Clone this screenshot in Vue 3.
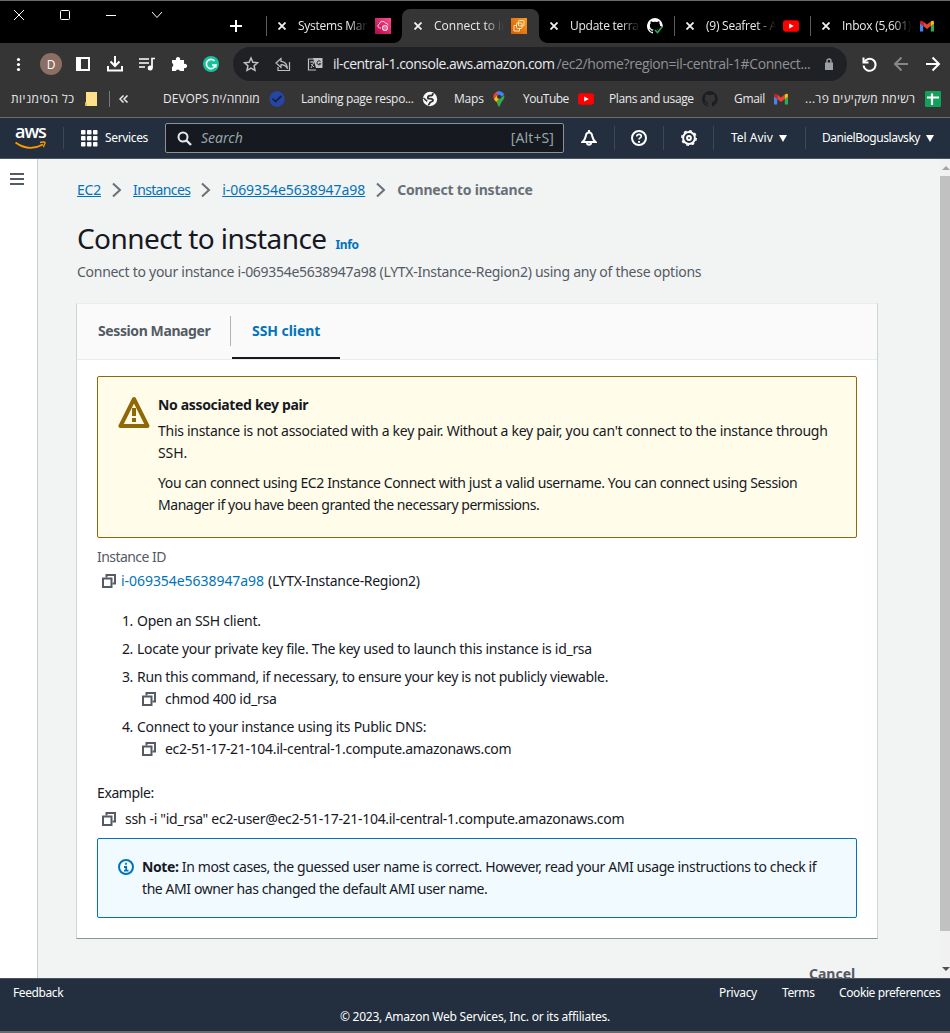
<script setup>
const tabs = [
  { title: 'Systems Man', icon: 'systems', cls: 'sys' },
  { title: 'Connect to in', icon: 'ec2', cls: 'act' },
  { title: 'Update terraf', icon: 'github', cls: 'plain' },
  { title: '(9) Seafret - A', icon: 'youtube', cls: 'sep' },
  { title: 'Inbox (5,601)', icon: 'gmail', cls: 'sep' }
]
const bookmarks = [
  { title: 'כל הסימניות', icon: 'folder', cls: 'b-all', rtl: true },
  { title: 'מומחה/ית DEVOPS', icon: 'badge', cls: 'b-dev', rtl: true },
  { title: 'Landing page respo...', icon: 'globe', cls: 'b-land' },
  { title: 'Maps', icon: 'maps', cls: 'b-maps' },
  { title: 'YouTube', icon: 'youtube', cls: 'b-yt' },
  { title: 'Plans and usage', icon: 'githubdark', cls: 'b-plans' },
  { title: 'Gmail', icon: 'gmail', cls: 'b-gmail' },
  { title: 'רשימת משקיעים פר...', icon: 'sheet', cls: 'b-sheet', rtl: true }
]
const crumbs = [
  { t: 'EC2', c: 'c1' },
  { t: 'Instances', c: 'c2' },
  { t: 'i-069354e5638947a98', c: 'c3' }
]
</script>

<template>
  <div class="screen">
    <svg class="defs" width="0" height="0">
      <defs>
        <linearGradient id="pink" x1="0" y1="1" x2="1" y2="0"><stop offset="0" stop-color="#b0084d" /><stop offset="1" stop-color="#ff4f8b" /></linearGradient>
        <linearGradient id="orange" x1="0" y1="1" x2="1" y2="0"><stop offset="0" stop-color="#d45b07" /><stop offset="1" stop-color="#f99b1d" /></linearGradient>
        <symbol id="systems" viewBox="0 0 16 16"><rect width="16" height="16" fill="url(#pink)" /><path d="M6 10H4.600a2 2 0 0 1-.2-3.900 3.200 3.200 0 0 1 6.100-.9A2.300 2.300 0 0 1 13 7.200" fill="none" stroke="#ffd0e0" /><circle cx="10" cy="10" r="2.400" fill="none" stroke="#ffd0e0" stroke-width="1.300" /><circle cx="10" cy="10" r=".8" fill="#ffd0e0" /></symbol>
        <symbol id="ec2" viewBox="0 0 16 16"><rect width="16" height="16" fill="url(#orange)" /><g fill="none" stroke="#ffe3bd" stroke-width="1"><rect x="7.500" y="2.500" width="5.500" height="5.500" rx="1" /><rect x="5.500" y="5" width="5.500" height="5.500" rx="1" /><path d="M5 7.500H3v5.500h5.500V11" /></g></symbol>
        <symbol id="github" viewBox="0 0 16 16"><path d="M8 0a8 8 0 0 0-2.500 15.600c.4.100.5-.2.500-.4v-1.500c-2.200.5-2.700-1-2.700-1-.4-.9-.9-1.200-.9-1.200-.7-.5.1-.5.100-.5.800.1 1.200.8 1.200.8.700 1.300 1.900.9 2.300.7.100-.5.300-.9.500-1.100-1.800-.2-3.600-.9-3.600-4 0-.9.300-1.600.8-2.100-.1-.2-.4-1 .1-2.100 0 0 .7-.2 2.200.8a7.500 7.500 0 0 1 4 0c1.500-1 2.200-.8 2.200-.8.400 1.100.2 1.900.1 2.100.5.600.8 1.300.8 2.100 0 3.100-1.900 3.700-3.600 4 .3.200.5.700.5 1.500v2.200c0 .2.100.5.500.4A8 8 0 0 0 8 0z" fill="currentColor" /></symbol>
        <symbol id="youtube" viewBox="0 0 16 16"><rect y="2.300" width="16" height="11.500" rx="2.800" fill="#f00" /><path d="M6.200 5.400v5.200L10.800 8z" fill="#fff" /></symbol>
        <symbol id="gmail" viewBox="0 0 16 16"><path d="M1 4v9.500h3.200V7z" fill="#4285f4" /><path d="M15 4v9.500h-3.200V7z" fill="#34a853" /><path d="M4.200 3.600L8 6.600l3.800-3V8L8 11 4.200 8z" fill="#ea4335" /><path d="M1 4.200C1 2.500 2.700 2.200 4.200 3.600V8L1 5.600z" fill="#c5221f" /><path d="M15 4.200c0-1.700-1.700-2-3.200-.6V8L15 5.600z" fill="#fbbc04" /></symbol>
        <symbol id="folder" viewBox="0 0 16 16"><path d="M3 1h11v14H2v-3l1-1z" fill="#ffe08a" /><path d="M2 11.500l2 1V15H2z" fill="#e9b949" /></symbol>
        <symbol id="badge" viewBox="0 0 16 16"><circle cx="8" cy="8" r="7.700" fill="#2646a6" /><path d="M3.500 7.500l3 3L12.500 5" fill="none" stroke="#14233f" stroke-width="1.700" /></symbol>
        <symbol id="globe" viewBox="0 0 16 16"><circle cx="8" cy="8" r="7.200" fill="#f8f9fa" /><path d="M10.800 2.200c.3 2-1 2.500-2.800 2.500S5.500 6 6 7.500c2 .3 4.500-.2 5 1.500s-2.200 1.600-2.800 2.400-.7 1.700-2 2.600" fill="none" stroke="#303134" stroke-width="1.800" /><path d="M1.500 7l3.700 3.400" stroke="#303134" stroke-width="1.500" /></symbol>
        <symbol id="maps" viewBox="0 0 16 16"><path d="M8 .3a5.500 5.500 0 0 0-4.300 2L7 5z" fill="#ea4335" /><path d="M3.700 2.300A5.400 5.400 0 0 0 2.900 8L7 5z" fill="#ea4335" /><path d="M8 .3A5.500 5.500 0 0 1 13.100 4L9 6 5 1.200z" fill="#4285f4" /><path d="M13.100 4c1 3-1 5-2.500 7-1.200 1.600-1.600 4.700-2.600 4.700S7 13.500 5.500 11z" fill="#34a853" /><path d="M2.900 8c.6 1.300 1.700 2.300 2.600 3L9 7 6.500 4z" fill="#fbbc04" /><circle cx="8" cy="5.800" r="2" fill="#303134" /></symbol>
        <symbol id="sheet" viewBox="0 0 16 16"><rect width="16" height="16" rx="1" fill="#12a05c" /><path d="M2 6.500h12M7 2.500V14" stroke="#fff" stroke-width="2.200" /></symbol>
        <symbol id="copy" viewBox="0 0 14 14"><path d="M4.500 3.500V1H13v8.500h-2.500" fill="none" stroke="#545b64" stroke-width="2" /><path d="M1 4.500h8.500V13H1z" fill="none" stroke="#545b64" stroke-width="2" /></symbol>
      </defs>
    </svg>

    <div class="tabstrip">
      <svg class="winctl" width="175" height="42" fill="none" stroke="#fff" stroke-width="1"><path d="M14 9l10 10M24 9l-10 10" /><rect x="60.500" y="9.500" width="9" height="9" rx="1" /><path d="M106 14.500h10M152 11l5 5.500 5-5.500" /></svg>
      <svg class="plus" width="12" height="12"><path d="M6 0v12M0 6h12" stroke="#fff" stroke-width="2" /></svg>
      <div v-for="t in tabs" :key="t.title" class="tab" :class="t.cls">
        <svg class="x" width="8" height="8"><path d="M.5.5l7 7M7.500.5l-7 7" stroke="#f1f1f1" stroke-width="1.800" /></svg>
        <span class="tabtext">{{ t.title }}</span>
        <span class="fav">
          <svg width="16" height="16"><use :href="'#' + t.icon" /></svg>
          <svg v-if="t.icon === 'github'" class="check" width="9" height="8"><path d="M1 4l2.500 2.500L8 1" stroke="#000" stroke-width="4" fill="none" /><path d="M1 4l2.500 2.500L8 1" stroke="#2da94f" stroke-width="1.600" fill="none" /></svg>
        </span>
      </div>
    </div>

    <div class="toolbar">
      <svg class="tools" width="233" height="38">
        <g fill="#fff"><circle cx="18.500" cy="16.500" r="1.600" /><circle cx="18.500" cy="21.500" r="1.600" /><circle cx="18.500" cy="26.500" r="1.600" /></g>
        <circle cx="51" cy="21" r="11" fill="#8d6e63" />
        <text x="51" y="25.500" text-anchor="middle" class="avatar">D</text>
        <path d="M77 15h12v12H77z" fill="none" stroke="#fff" stroke-width="2" /><path d="M77 15h4v12h-4z" fill="#fff" />
        <path d="M115 13v10M110.500 18.500l4.500 4.500 4.500-4.500M108 23v4.500h14V23" fill="none" stroke="#fff" stroke-width="2" />
        <path d="M139 16h10M139 20h10M139 24h6" stroke="#fff" stroke-width="1.500" /><path d="M152 25v-9.500h3" fill="none" stroke="#fff" stroke-width="1.700" /><circle cx="150.200" cy="25" r="2.500" fill="#fff" />
        <path d="M172 17h4a2.200 2.200 0 1 1 4 0h4v4a2.200 2.200 0 1 1 0 4v3h-4a2.200 2.200 0 0 0-4.200 0H172v-4a2.200 2.200 0 0 0 0-4z" fill="#fff" />
        <circle cx="211" cy="21" r="8" fill="#15c39a" /><path d="M214.500 18a4.600 4.600 0 1 0 1 4h-3.500" fill="none" stroke="#fff" stroke-width="1.600" /><path d="M213 24h3v-3" fill="none" stroke="#fff" stroke-width="1.200" />
      </svg>
      <div class="omnibox">
        <svg width="100" height="34" fill="none" stroke="#bdc1c6" stroke-width="1.500">
          <path d="M18 11l1.900 4.200 4.600.5-3.400 3.100.9 4.500-4-2.300-4 2.300.9-4.500-3.400-3.100 4.600-.5z" />
          <path d="M48 11.500l-5 4.500 5 4.500v-2.800c3.500 0 5 1 6.500 4-.3-4.500-2.500-7-6.500-7.300z" stroke-width="1.200" /><path d="M45 20v3.500h11.500V15" stroke-width="1.200" />
          <path d="M83 12h-7.500v11H83" stroke-width="1.200" /><path d="M77 15h4M79 14v1.500M78 21l3-6M78 17l3 3" stroke-width=".9" /><path d="M80 11h9.500v10H83z" fill="#bdc1c6" stroke="none" /><path d="M87.500 14.500a2 2 0 1 0 .3 2.200h-2" stroke="#202124" stroke-width="1" />
        </svg>
        <span class="url"><span class="host">il-central-1.console.aws.amazon.com</span>/ec2/home?region=il-central-1#Connect...</span>
        <svg class="lock" width="8" height="12"><path d="M0 4.500h8V12H0z" fill="#9aa0a6" /><path d="M2 5V3a2 2 0 0 1 4 0v2" fill="none" stroke="#9aa0a6" stroke-width="1.400" /></svg>
      </div>
      <svg class="navs" width="103" height="38" fill="none" stroke-width="2">
        <path d="M16.500 14.500v5h5" stroke="#fff" /><path d="M17 19.500a6 6 0 1 1-.4 3" stroke="#fff" />
        <path d="M61 21H48.500M54.500 14.500L48 21l6.500 6.500" stroke="#85878a" />
        <path d="M79 21h12.500M85.500 14.500L92 21l-6.500 6.500" stroke="#fff" />
      </svg>
    </div>

    <div class="bookmarks">
      <template v-for="(b, i) in bookmarks" :key="b.title">
        <div class="bm" :class="b.cls">
          <span class="bmt" :dir="b.rtl ? 'rtl' : 'ltr'">{{ b.title }}</span>
          <svg width="16" height="16" :class="{ dark: b.icon === 'githubdark' }"><use :href="b.icon === 'githubdark' ? '#github' : '#' + b.icon" /></svg>
        </div>
        <div v-if="i === 0" class="more"><svg width="10" height="8"><path d="M4.500.5L1 4l3.500 3.500M8.500.5L5 4l3.500 3.500" fill="none" stroke="#e8eaed" stroke-width="1.500" /></svg></div>
      </template>
    </div>

    <header class="awsnav">
      <div class="logo">
        <span class="aws">aws</span>
        <svg width="32" height="9" fill="none" stroke="#ff9900" stroke-width="1.800"><path d="M.5 1.500c9 6.500 19 6.500 27.500 2" /><path d="M25 1.500c3-1 5.500-.5 5 .5s-.5 2.500-1.800 4" stroke-width="1.400" /></svg>
      </div>
      <div class="services">
        <svg width="17" height="17" fill="#fff"><template v-for="r in 3" :key="r"><rect v-for="c in 3" :key="c" :x="(c - 1) * 6" :y="(r - 1) * 6" width="4.500" height="4.500" rx=".8" /></template></svg>
        <span class="n-serv">Services</span>
      </div>
      <div class="search">
        <svg width="15" height="15" fill="none" stroke="#e4e8e8" stroke-width="2"><circle cx="6" cy="6" r="4.500" /><path d="M9.500 9.500l4.500 4.500" stroke-width="2.400" /></svg>
        <span class="ph">Search</span><span class="alt">[Alt+S]</span>
      </div>
      <div class="ic bell"><svg width="16" height="16" fill="none" stroke="#fff" stroke-width="2"><path d="M8 0v2M1.500 12h13C12.500 10 11.700 8.500 11.300 6.500 11 3.500 9.800 2.500 8 2.500S5 3.500 4.700 6.500C4.300 8.500 3.500 10 1.500 12z" /><path d="M6 12.500c0 3 4 3 4 0" /></svg></div>
      <div class="ic help"><svg width="16" height="16" fill="none" stroke="#fff" stroke-width="2"><circle cx="8" cy="8" r="7" /><path d="M5.700 6.500c0-3 4.600-2.700 4.600-.2C10.300 8 8 7.800 8 9.600" stroke-width="1.600" /><path d="M8 11v1.700" /></svg></div>
      <div class="ic gear"><svg width="16" height="16" fill="none" stroke="#fff"><circle cx="8" cy="8" r="5.900" stroke-width="2" /><circle cx="8" cy="8" r="7.200" stroke-width="1.500" stroke-dasharray="2.830 2.825" /><circle cx="8" cy="8" r="1.900" stroke-width="2" /></svg></div>
      <div class="region"><span class="n-tel">Tel Aviv</span><i class="tri"></i></div>
      <div class="user"><span class="n-user">DanielBoguslavsky</span><i class="tri"></i></div>
    </header>

    <div class="body">
      <aside class="side"><svg width="14" height="12"><path d="M0 1h14M0 6h14M0 11h14" stroke="#545b64" stroke-width="2" /></svg></aside>
      <main class="main">
        <nav class="crumbs">
          <template v-for="c in crumbs" :key="c.t"><a :class="c.c">{{ c.t }}</a><svg width="10" height="16"><path d="M1 1.500L8 8l-7 6.500" fill="none" stroke="#687078" stroke-width="2" /></svg></template>
          <b class="c4">Connect to instance</b>
        </nav>
        <div class="head"><h1>Connect to instance</h1><a class="info">Info</a></div>
        <p class="desc">Connect to your instance i-069354e5638947a98 (LYTX-Instance-Region2) using any of these options</p>

        <section class="panel">
          <div class="ptabs">
            <div class="pt sm"><span>Session Manager</span></div>
            <div class="pt ssh"><span>SSH client</span></div>
          </div>
          <div class="pbody">
            <div class="alert">
              <svg width="32" height="32"><path d="M16 3L2.500 30h27z" fill="none" stroke="#906806" stroke-width="4" stroke-linejoin="round" /><path d="M16 12v8M16 22v4" stroke="#906806" stroke-width="4" /></svg>
              <div>
                <b class="line a0">No associated key pair</b>
                <p><span class="line a1">This instance is not associated with a key pair. Without a key pair, you can't connect to the instance through</span><span class="line a2">SSH.</span></p>
                <p class="second"><span class="line a3">You can connect using EC2 Instance Connect with just a valid username. You can connect using Session</span><span class="line a4">Manager if you have been granted the necessary permissions.</span></p>
              </div>
            </div>
            <div class="label">Instance ID</div>
            <div class="row idrow"><svg width="14" height="14"><use href="#copy" /></svg><a class="i1">i-069354e5638947a98</a><span class="i2">(LYTX-Instance-Region2)</span></div>
            <div class="steps">
              <div class="step"><span>1.</span><span class="s1">Open an SSH client.</span></div>
              <div class="step"><span>2.</span><span class="s2">Locate your private key file. The key used to launch this instance is id_rsa</span></div>
              <div class="step"><span>3.</span><div><span class="s3">Run this command, if necessary, to ensure your key is not publicly viewable.</span><div class="row sub"><svg width="14" height="14"><use href="#copy" /></svg><span class="s4">chmod 400 id_rsa</span></div></div></div>
              <div class="step"><span>4.</span><div><span class="s5">Connect to your instance using its Public DNS:</span><div class="row sub"><svg width="14" height="14"><use href="#copy" /></svg><span class="s6">ec2-51-17-21-104.il-central-1.compute.amazonaws.com</span></div></div></div>
            </div>
            <div class="ex">Example:</div>
            <div class="row exrow"><svg width="14" height="14"><use href="#copy" /></svg><span class="e1">ssh -i "id_rsa" ec2-user@ec2-51-17-21-104.il-central-1.compute.amazonaws.com</span></div>
            <div class="note">
              <svg width="16" height="16"><circle cx="8" cy="8" r="7" fill="none" stroke="#0073bb" stroke-width="2" /><path d="M8 3.800v2M6 8h2.200v3.500M6 11.700h4.500" fill="none" stroke="#0073bb" stroke-width="1.800" /></svg>
              <div><span class="line n1"><b>Note:</b> In most cases, the guessed user name is correct. However, read your AMI usage instructions to check if</span><span class="line n2">the AMI owner has changed the default AMI user name.</span></div>
            </div>
          </div>
        </section>
        <div class="actions"><b>Cancel</b></div>
      </main>
      <div class="scroll"><i class="up"></i><div class="thumb"></div><i class="down"></i></div>
    </div>

    <footer class="foot">
      <div class="frow"><span class="f1">Feedback</span><span class="f2">Privacy</span><span class="f3">Terms</span><span class="f4">Cookie preferences</span></div>
      <div class="copyr"><span>© 2023, Amazon Web Services, Inc. or its affiliates.</span></div>
    </footer>
  </div>
</template>

<style>
body { margin: 0; overflow: hidden; }
</style>

<style scoped>
* { box-sizing: border-box; }
p, h1 { margin: 0; }
svg { display: block; flex: none; }
.screen { width: 950px; height: 1033px; display: flex; flex-direction: column; overflow: hidden; font: 14px/22px "Noto Sans", "Open Sans", sans-serif; color: #16191f; white-space: nowrap; }
.defs { position: absolute; }
.tabstrip { height: 43px; flex: none; background: #000; border-top: 1px solid #6b6b6b; display: flex; color: #e8eaed; font: 12px/18px "Open Sans", sans-serif; }
.winctl { margin-right: 55px; }
.plus { margin: 19px 24px 0 0; }
.tab { width: 136px; flex: none; height: 34px; margin-top: 8px; display: flex; align-items: center; padding-left: 12px; position: relative; }
.sys::before, .sep::before { content: ""; position: absolute; left: 0; top: 7px; width: 1px; height: 20px; background: #5c5c5c; }
.act { background: #353535; border-radius: 8px 8px 0 0; width: 137px; margin-right: -1px; }
.act::before, .act::after { content: ""; position: absolute; bottom: 0; width: 8px; height: 8px; }
.act::before { left: -8px; background: radial-gradient(circle at 0 0, #000 7.500px, #353535 8px); }
.act::after { right: -8px; background: radial-gradient(circle at 100% 0, #000 7.500px, #353535 8px); }
.tabtext { margin-left: 12px; width: 70px; letter-spacing: -.25px; -webkit-mask-image: linear-gradient(90deg, #000 72%, transparent 100%); mask-image: linear-gradient(90deg, #000 72%, transparent 100%); }
.act .tabtext { letter-spacing: 0; }
.fav { margin-left: 7px; position: relative; color: #fff; }
.check { position: absolute; right: 0; bottom: 0; }
.toolbar { height: 42px; flex: none; background: #353535; display: flex; }
.avatar { font: 12px "Open Sans", sans-serif; fill: #fff; }
.omnibox { width: 614px; height: 34px; margin-top: 4px; background: #202124; border-radius: 17px; display: flex; align-items: center; }
.url { width: 491px; font: 14px/20px "Open Sans", sans-serif; color: #8f9297; letter-spacing: -.4px; }
.host { color: #e8eaed; letter-spacing: -.52px; margin-right: 2px; }
.lock { margin-left: 1px; }
.bookmarks { height: 33px; flex: none; background: #353535; border-bottom: 1px solid #6c6c6c; display: flex; align-items: center; padding: 0 0 4px 11px; color: #e8eaed; font: 12px/18px "Open Sans", "DejaVu Sans", sans-serif; }
.bm { display: flex; align-items: center; justify-content: space-between; flex: none; }
.dark { color: #1b1f23; }
.b-all { width: 88px; }
.b-all .bmt { letter-spacing: .45px; }
.more { width: 54px; margin-left: 10px; height: 16px; border-left: 1px solid #77797b; padding: 4px 0 0 9px; }
.b-dev { width: 122px; }
.b-land { width: 137px; margin-left: 16px; letter-spacing: -.33px; }
.b-maps { width: 53px; margin-left: 16px; letter-spacing: -.2px; }
.b-yt { width: 71px; margin-left: 16px; letter-spacing: -.5px; }
.b-plans { width: 109px; margin-left: 15px; letter-spacing: -.4px; }
.b-gmail { width: 55px; margin-left: 16px; letter-spacing: -.3px; }
.b-sheet { width: 136px; margin-left: 16px; }
.b-sheet .bmt { letter-spacing: .3px; }
.awsnav { height: 41px; flex: none; background: #232f3e; border-bottom: 1px solid #4a5563; color: #fff; display: flex; align-items: center; font-size: 12px; line-height: 20px; }
.logo { width: 64px; height: 22px; border-right: 1px solid #414750; padding-left: 15px; }
.aws { display: block; font: 600 18px/15px "Open Sans", sans-serif; letter-spacing: -1px; margin-top: -3px; height: 17px; }
.services { width: 101px; padding-left: 17px; display: flex; align-items: center; gap: 7px; }
.n-serv { letter-spacing: -.35px; }
.search { width: 399px; height: 30px; background: #161920; border: 1px solid #879596; border-radius: 2px; display: flex; align-items: center; padding: 0 9px 0 11px; color: #95a5a6; font-size: 14px; }
.ph { font-style: italic; margin-left: 9px; flex: 1; }
.alt { letter-spacing: .1px; }
.ic { width: 50px; height: 24px; display: flex; align-items: center; justify-content: center; border-right: 1px solid #414750; }
.bell { width: 51px; }
.help { width: 49px; }
.region, .user { height: 22px; display: flex; align-items: center; }
.region { width: 92px; padding-left: 17px; border-right: 1px solid #414750; }
.user { padding-left: 16px; }
.n-user { letter-spacing: -.45px; }
.tri { border: 4px solid transparent; border-top: 7px solid #fff; border-bottom: 0; margin-left: 6px; }
.body { height: 819px; flex: none; display: flex; background: #f2f3f3; overflow: hidden; }
.side { width: 38px; background: #fff; border-right: 1px solid #c9cccf; padding: 14px 0 0 10px; }
.main { width: 902px; padding: 20px 0 0 39px; }
.crumbs { display: flex; align-items: center; height: 22px; }
.crumbs svg { margin: 0 11px; }
a { color: #0073bb; }
.crumbs a { text-decoration: underline; }
b { font-weight: 700; }
.c1 { letter-spacing: -.2px; }
.c2 { letter-spacing: -.65px; }
.c3 { letter-spacing: -.05px; }
.c4 { color: #687078; letter-spacing: -.2px; }
.head { display: flex; align-items: baseline; height: 36px; margin-top: 19px; gap: 9px; }
h1 { font-weight: 400; font-size: 28px; line-height: 36px; letter-spacing: -.58px; }
.info { font-size: 12px; font-weight: 700; letter-spacing: -.4px; }
.desc { color: #545b64; margin-top: 5px; letter-spacing: -.28px; }
.panel { margin: 20px 0 0 -1px; width: 802px; height: 636px; background: #fff; border: 1px solid #cfd4d6; border-top-color: #eaeded; border-bottom-color: #879596; }
.ptabs { height: 56px; background: #fafafa; border-bottom: 1px solid #eaeded; display: flex; font-weight: 700; }
.pt { display: flex; align-items: center; }
.sm { color: #545b64; padding-left: 21px; width: 154px; height: 30px; margin: 12px 0 0; border-right: 1px solid #aab7b8; letter-spacing: -.4px; }
.ssh { color: #0073bb; padding-left: 20px; margin-left: 1px; width: 108px; height: 55px; border-bottom: 2px solid #16191f; padding-top: 1px; letter-spacing: -.05px; }
.pbody { padding: 16px 20px 0 20px; }
.alert { height: 162px; border: 1px solid #906806; background: #fffce9; border-radius: 2px; display: flex; padding: 17px 0 0 20px; gap: 8px; }
.alert svg { margin-top: 2px; }
.line { display: block; width: max-content; }
.a0 { letter-spacing: -.34px; }
.a1 { letter-spacing: -.28px; }
.a2 { letter-spacing: -.1px; }
.a3 { letter-spacing: -.37px; }
.a4 { letter-spacing: -.46px; }
.alert p { margin-top: 4px; }
.alert p.second { margin-top: 8px; }
.label { color: #545b64; margin-top: 8px; letter-spacing: -.55px; }
.row { display: flex; align-items: center; height: 22px; }
.idrow { margin-top: 2px; padding-left: 5px; }
.i1 { margin: 0 4px 0 5px; letter-spacing: -.05px; }
.i2 { letter-spacing: -.3px; }
.steps { margin: 18px 0 0 25px; display: grid; gap: 6px; }
.step { display: flex; gap: 4px; }
.step > span:first-child { width: 11px; letter-spacing: -.4px; }
.s1, .s4 { letter-spacing: -.25px; }
.s2 { letter-spacing: -.29px; }
.s3 { letter-spacing: -.33px; }
.s5 { letter-spacing: -.28px; }
.s6 { letter-spacing: -.31px; }
.e1 { letter-spacing: -.3px; }
.n1 { letter-spacing: -.39px; }
.n2 { letter-spacing: -.42px; }
.sub { padding-left: 5px; gap: 9px; }
.ex { margin-top: 22px; letter-spacing: -.4px; }
.exrow { margin-top: 4px; padding-left: 5px; gap: 9px; }
.note { margin-top: 8px; height: 80px; border: 1px solid #0073bb; background: #f1faff; border-radius: 2px; display: flex; gap: 8px; padding: 17px 0 0 20px; }
.note svg { margin-top: 3px; }
.actions { margin-top: 24px; padding-left: 732px; color: #545b64; }
.scroll { width: 10px; background: #f1f1f1; display: flex; flex-direction: column; align-items: flex-end; }
.up, .down { border: 4px solid transparent; margin-right: 0; }
.up { border-top: 0; border-bottom: 4px solid #a3a3a3; margin-top: 7px; }
.down { border-bottom: 0; border-top: 4px solid #505050; margin-top: 36px; }
.thumb { width: 10px; height: 755px; background: #c1c1c1; margin-top: 6px; }
.foot { height: 55px; flex: none; background: #232f3e; border-top: 1px solid #4d545c; border-bottom: 2px solid #68696b; color: #fff; font-size: 12px; line-height: 20px; }
.frow { display: flex; padding: 4px 0 0 13px; letter-spacing: -.4px; }
.f1 { width: 706px; }
.f2 { width: 63px; letter-spacing: -.3px; }
.f3 { width: 57px; }
.copyr { text-align: center; margin-top: 4px; letter-spacing: -.24px; }
</style>
